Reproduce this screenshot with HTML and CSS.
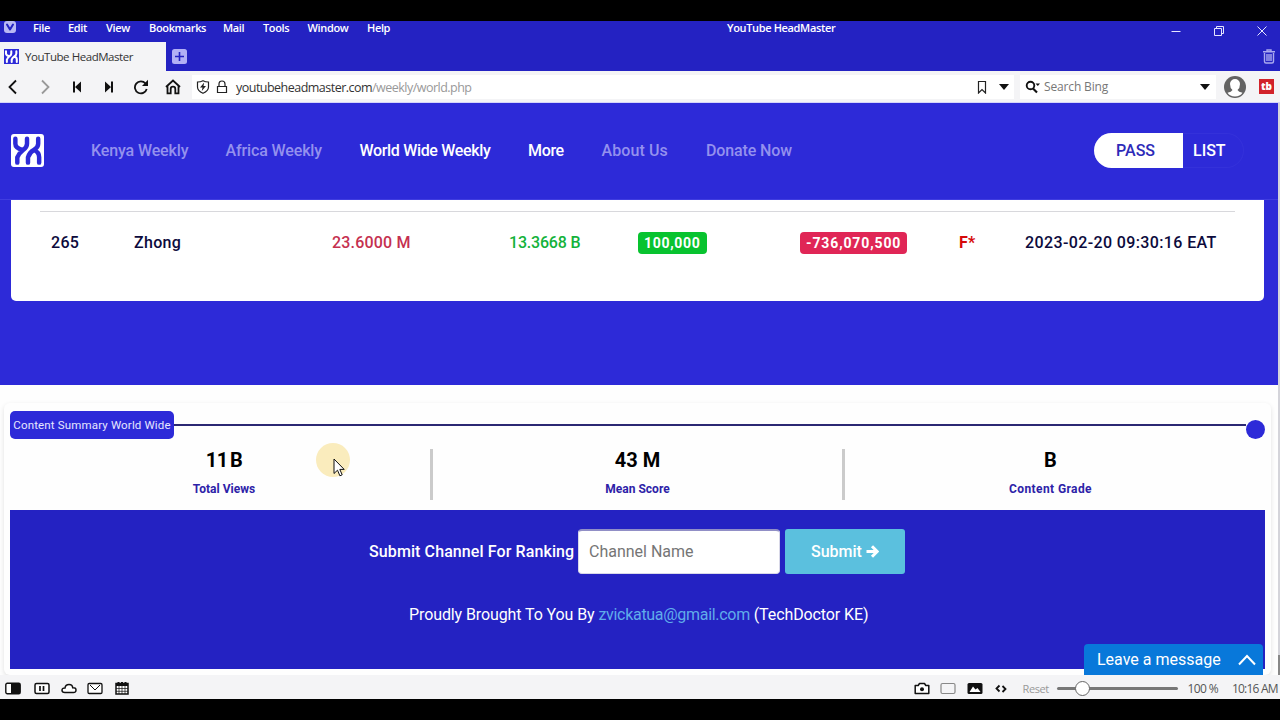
FILE: index.html
```html
<!DOCTYPE html>
<html lang="en">
<head>
    <meta charset="UTF-8">
    <meta name="viewport" content="width=device-width, initial-scale=1.0">
    <title>YouTube HeadMaster</title>
    <link rel="stylesheet" href="styles.css">
</head>
<body>
    <header class="titlebar">
        <div class="menubar">
            <svg class="vivaldi" viewBox="0 0 12 12"><rect width="12" height="12" rx="3" fill="#b9b8f3"/><path d="M3 3.5l3 5 3-5" fill="none" stroke="#2422c2" stroke-width="2" stroke-linecap="round" stroke-linejoin="round"/></svg>
            <span class="m-file">File</span>
            <span class="m-edit">Edit</span>
            <span class="m-view">View</span>
            <span class="m-bookmarks">Bookmarks</span>
            <span class="m-mail">Mail</span>
            <span class="m-tools">Tools</span>
            <span class="m-window">Window</span>
            <span class="m-help">Help</span>
            <span class="window-title">YouTube HeadMaster</span>
            <div class="window-buttons">
                <svg viewBox="0 0 12 12"><path d="M1.5 6.5h9"/></svg>
                <svg viewBox="0 0 12 12"><path d="M1.5 3.5h7v7h-7zM3.5 3.5v-2h7v7h-2"/></svg>
                <svg viewBox="0 0 12 12"><path d="M1.5 1.5l9 9M10.5 1.5l-9 9"/></svg>
            </div>
        </div>
        <div class="tabs">
            <div class="tab">
                <svg class="favicon" viewBox="0 0 34 34"><rect width="34" height="34" fill="#2d2ad8"/><use href="#yk" stroke="#fff"/></svg>
                <span>YouTube HeadMaster</span>
            </div>
            <svg class="new-tab" viewBox="0 0 15 15"><rect width="15" height="15" rx="2.5" fill="#b2b0f5"/><path d="M7.5 3v9M3 7.5h9" stroke="#2422c2" stroke-width="1.6"/></svg>
            <svg class="trash" viewBox="0 0 12 15"><path d="M0 2.7h12M4 2.5V1h4v1.5M1.5 4v8.5q0 1.5 1.5 1.5h6q1.500 0 1.500-1.500V4M4 5v7M6 5v7M8 5v7" fill="none" stroke="#aaa9ef" stroke-width="1.4"/></svg>
        </div>
    </header>

    <div class="toolbar">
        <div class="nav-buttons">
            <svg viewBox="0 0 16 16"><path d="M11 1.500L4.500 8l6.500 6.500"/></svg>
            <svg class="off" viewBox="0 0 16 16"><path d="M5 1.500L11.500 8 5 14.500"/></svg>
            <svg class="solid" viewBox="0 0 16 16"><path d="M4 2.500h2v11H4zM12 2.500v11L6 8z"/></svg>
            <svg class="solid" viewBox="0 0 16 16"><path d="M10 2.500h2v11h-2zM4 2.500v11L10 8z"/></svg>
            <svg viewBox="0 0 16 16"><path d="M12.500 4.500A6 6 0 1 0 13.700 10"/><path d="M15 .8v6.200H9z" fill="#111" stroke="none"/></svg>
            <svg viewBox="0 0 16 16"><path d="M1 8l7-6.500L15 8M2.500 7v7.300h3.200V10a2.300 2.300 0 0 1 4.600 0v4.300h3.200V7"/></svg>
        </div>
        <div class="address">
            <svg viewBox="0 0 14 14"><path d="M1.500 2q3 0 5.500-1.300Q9.500 2 12.500 2v5q0 3.800-5.500 6.300Q1.500 10.800 1.500 7z" fill="none" stroke="#222" stroke-width="1.200"/><path d="M8.200 2.500L4 7.500h2.500L5.800 11 10 6H7.500z" fill="#222"/></svg>
            <svg viewBox="0 0 14 14"><path d="M2.500 6.500h9v6h-9zM4 6.500V4q0-3 3-3t3 3v2.500" fill="none" stroke="#222" stroke-width="1.200"/></svg>
            <span class="url">youtubeheadmaster.com<span class="path">/weekly/world.php</span></span>
            <svg class="bookmark" viewBox="0 0 14 14"><path d="M3.500 1.500h7v11.500L7 9.500 3.500 13z" fill="none" stroke="#222" stroke-width="1.200"/></svg>
            <i class="caret"></i>
        </div>
        <div class="search">
            <svg viewBox="0 0 16 14"><circle cx="5.500" cy="5.500" r="3.800" fill="none" stroke="#111" stroke-width="1.900"/><path d="M8 8.500l4 4" stroke="#111" stroke-width="2.200"/><path d="M10.500 3.500h4.500l-2.200 2.500z" fill="#111"/></svg>
            <span>Search Bing</span>
            <i class="caret"></i>
        </div>
        <svg class="avatar" viewBox="0 0 22 22"><circle cx="11" cy="11" r="11" fill="#636363"/><path d="M6 8a5 5 0 0 1 10 0q0 4-2.500 6 1 2 5 2.700Q16 20.500 11 20.500T3.500 16.700q4-.7 5-2.700Q6 12 6 8" fill="#fff"/></svg>
        <span class="ext">tb</span>
    </div>

    <main class="page">
        <nav class="site-nav">
            <svg class="logo" viewBox="0 0 34 34">
                <rect width="34" height="34" rx="3" fill="#fff"/>
                <g id="yk" fill="none" stroke-width="4.600" stroke-linecap="round">
                    <path d="M4.500 5v5q0 4.500 7.500 6.500M16.500 5v5q0 3.500-4 6.500t-6 7.500v5.500M28 5v5q0 4-4.500 6.500T17.500 24v5.500M23.500 16.500q5.500 2 5.500 7.500v5.500"/>
                </g>
            </svg>
            <div class="links">
                <a>Kenya Weekly</a>
                <a>Africa Weekly</a>
                <a class="active">World Wide Weekly</a>
                <a class="active">More</a>
                <a class="about">About Us</a>
                <a>Donate Now</a>
            </div>
            <div class="toggle">
                <span class="pass">PASS</span>
                <span class="list">LIST</span>
            </div>
        </nav>

        <section class="hero">
            <div class="table-card">
                <div class="row">
                    <span>265</span>
                    <span>Zhong</span>
                    <span class="red">23.6000 M</span>
                    <span class="green">13.3668 B</span>
                    <span><b class="badge up">100,000</b></span>
                    <span><b class="badge down">-736,070,500</b></span>
                    <span class="grade">F*</span>
                    <span class="date">2023-02-20 09:30:16 EAT</span>
                </div>
            </div>
        </section>

        <section class="summary">
            <div class="summary-head">
                <span class="summary-label">Content Summary World Wide</span>
                <i class="line"></i>
                <i class="dot"></i>
            </div>
            <div class="stats">
                <div class="stat"><strong class="views">11 B</strong><span>Total Views</span></div>
                <div class="stat"><strong>43 M</strong><span>Mean Score</span></div>
                <div class="stat"><strong>B</strong><span>Content Grade</span></div>
            </div>
            <footer class="footer">
                <form class="submit-form">
                    <label for="channel">Submit Channel For Ranking</label>
                    <input id="channel" type="text" placeholder="Channel Name">
                    <button type="button">Submit <svg viewBox="0 0 13 13"><path d="M.5 6.500h10.500M6 1.300l5.200 5.200L6 11.700" fill="none" stroke="#fff" stroke-width="3"/></svg></button>
                </form>
                <p class="credit">Proudly Brought To You By <a>zvickatua@gmail.com</a> (TechDoctor KE)</p>
            </footer>
        </section>

        <i class="scrollbar"></i>
        <div class="chat">
            <span>Leave a message</span>
            <svg viewBox="0 0 18 12"><path d="M1 10.500l8-8.500 8 8.500" fill="none" stroke="#fff" stroke-width="2"/></svg>
        </div>
        <i class="halo"></i>
        <svg class="cursor" viewBox="0 0 12 19"><path d="M1 1v14.500l3.500-3.300 2.400 5.600 2.300-1-2.400-5.400H11.200z" fill="#fff" stroke="#111"/></svg>
    </main>

    <div class="statusbar">
        <div class="panel-icons">
            <svg viewBox="0 0 16 12"><rect x=".8" y=".8" width="14.400" height="10.400" rx="1.500" fill="#fff" stroke="#111" stroke-width="1.400"/><path d="M6 1h9v10H6z" fill="#111"/></svg>
            <svg viewBox="0 0 16 12"><rect x="1" y="1" width="14" height="10" rx="1.500" fill="#fff" stroke="#111" stroke-width="1.500"/><path d="M6 3.500v5M9.500 3.500v5" stroke="#111" stroke-width="1.700"/></svg>
            <svg viewBox="0 0 16 12"><path d="M4 10q-3 0-3-2.300T4 5.500Q4.500 2 8 2t3.700 3.200Q15 5 15 7.600T12 10z" fill="#fff" stroke="#111" stroke-width="1.500"/></svg>
            <svg viewBox="0 0 16 12"><rect x="1" y="1" width="14" height="10" rx="1.300" fill="#fff" stroke="#111" stroke-width="1.300"/><path d="M3 2.500l5 5 5-5" fill="none" stroke="#111"/></svg>
            <svg viewBox="0 0 16 13"><path d="M2 1.500h12V12H2z" fill="#fff" stroke="#111" stroke-width="1.500"/><path d="M2 3h12M4.500 0v3M8 0v3M11.500 0v3" stroke="#111" stroke-width="2"/><path d="M2 6.500h12M2 9.300h12M5 4v8M8 4v8M11 4v8" stroke="#111" stroke-width=".7"/></svg>
        </div>
        <div class="status-tools">
            <svg viewBox="0 0 16 12"><path d="M1.200 3h3L5.500 1h5l1.300 2h3v8H1.200z" fill="#fff" stroke="#111" stroke-width="1.500" stroke-linejoin="round"/><circle cx="8" cy="6.700" r="2" fill="#111"/></svg>
            <svg viewBox="0 0 16 12"><rect x="1" y="1" width="14" height="10" rx="1.500" fill="none" stroke="#888" stroke-width="1.200"/></svg>
            <svg viewBox="0 0 16 12"><rect x=".5" y=".5" width="15" height="11" rx="1.500" fill="#111"/><path d="M2.500 9.500L6 4l2.500 3 2-1.500 3 4z" fill="#fff"/></svg>
            <svg viewBox="0 0 16 12"><path d="M6.500 3L3.500 6l3 3M9.500 3.500L12.500 6.500l-3 3" fill="none" stroke="#111" stroke-width="1.800"/></svg>
            <span class="reset">Reset</span>
            <div class="zoom"><i class="knob"></i></div>
            <span class="percent">100 %</span>
            <span class="clock">10:16 AM</span>
        </div>
    </div>
</body>
</html>
```

FILE: styles.css
```css
* {
    box-sizing: border-box;
}
body {
    margin: 0;
    width: 1280px;
    height: 720px;
    padding: 21px 0;
    overflow: hidden;
    background: #000;
    font-family: "Open Sans", "Noto Sans", sans-serif;
    font-size: 12px;
}
svg {
    display: block;
    flex: none;
}
span {
    white-space: nowrap;
}

/* browser window */
.titlebar {
    height: 50px;
    background: #2422c2;
    color: #fff;
}
.menubar {
    display: flex;
    height: 21px;
    padding-left: 4px;
    font-size: 11px;
    font-weight: 600;
    line-height: 13px;
    letter-spacing: -0.35px;
}
.vivaldi {
    width: 12px;
    height: 12px;
    margin-right: 17px;
}
.m-file { width: 35px; }
.m-edit { width: 38px; }
.m-view { width: 43px; }
.m-bookmarks { width: 74px; }
.m-mail { width: 40px; }
.m-tools { width: 44.5px; }
.m-window { width: 59.5px; }
.m-help { width: 360px; }
.window-title {
    width: 443px;
}
.window-buttons {
    display: flex;
    gap: 31px;
    padding-top: 4px;
}
.window-buttons svg {
    width: 12px;
    height: 12px;
    fill: none;
    stroke: #e6e6ff;
}
.tabs {
    display: flex;
    align-items: center;
    height: 29px;
}
.tab {
    display: flex;
    align-items: center;
    gap: 6px;
    width: 166px;
    height: 29px;
    padding-left: 4px;
    background: #f4f4f6;
    color: #333;
    font-size: 11.5px;
    letter-spacing: -0.45px;
}
.favicon {
    width: 15px;
    height: 15px;
}
.new-tab {
    width: 15px;
    height: 15px;
    margin-left: 6px;
}
.trash {
    width: 12px;
    height: 15px;
    margin-left: auto;
    margin-right: 5px;
}
.toolbar {
    display: flex;
    align-items: center;
    height: 32px;
    background: #f4f4f6;
    border-bottom: 1px solid #d5d5fa;
}
.nav-buttons {
    display: flex;
    gap: 16px;
    width: 192px;
    padding-left: 5px;
}
.nav-buttons svg {
    width: 16px;
    height: 16px;
    fill: none;
    stroke: #111;
    stroke-width: 1.8;
}
.nav-buttons .off {
    stroke: #999;
}
.nav-buttons .solid {
    fill: #111;
    stroke: none;
}
.address {
    display: flex;
    align-items: center;
    gap: 5px;
    width: 822px;
    height: 24px;
    padding: 0 5px 0 4px;
    background: #fff;
}
.address svg {
    width: 14px;
    height: 14px;
}
.url {
    margin-left: 2px;
    padding-top: 1px;
    font-size: 12.5px;
    letter-spacing: -0.52px;
    color: #333;
}
.path {
    color: #999;
}
.address .bookmark {
    margin-left: auto;
    margin-right: 5px;
}
.caret {
    border: 5px solid transparent;
    border-top: 6px solid #111;
    border-bottom: 0;
}
.search {
    display: flex;
    align-items: center;
    width: 196px;
    height: 24px;
    margin-left: 6px;
    padding: 0 6px 0 5px;
    background: #fff;
    color: #777;
    letter-spacing: -0.15px;
}
.search svg {
    width: 16px;
    height: 14px;
    margin-right: 3px;
}
.search .caret {
    margin-left: auto;
}
.avatar {
    width: 22px;
    height: 22px;
    margin-left: 8px;
}
.ext {
    width: 15px;
    height: 15px;
    margin-left: 13px;
    background: #d2232a;
    color: #fff;
    font-size: 10px;
    font-weight: 800;
    line-height: 14px;
    text-align: center;
}

/* page */
.page {
    position: relative;
    height: 572px;
    overflow: hidden;
    background: #fefefe;
    font-family: Roboto, sans-serif;
    font-size: 16px;
}
.site-nav {
    display: flex;
    align-items: center;
    height: 97px;
    padding: 0 36px 2px 11px;
    background: #2d2ad8;
    border-bottom: 1px solid #403de0;
}
.logo {
    width: 33px;
    height: 33px;
    stroke: #2d2ad8;
}
.logo rect {
    stroke: none;
}
.links {
    display: grid;
    grid-template-columns: 134.5px 134px 168.5px 73.5px 104.5px 90px;
    margin-left: 47px;
    font-weight: 500;
    letter-spacing: -0.13px;
    color: #9491ee;
    white-space: nowrap;
}
.links .active {
    color: #fff;
    letter-spacing: -0.33px;
}
.links .about {
    letter-spacing: 0.1px;
}
.toggle {
    display: flex;
    width: 150px;
    height: 35px;
    margin-left: auto;
    border-radius: 18px;
    overflow: hidden;
    font-weight: 500;
    line-height: 35px;
    color: #fff;
    box-shadow: inset 0 0 0 1px #3431da;
}
.pass {
    width: 89px;
    padding-left: 22px;
    background: #fff;
    color: #2d2ab8;
}
.list {
    padding-left: 10px;
}
.hero {
    height: 185px;
    padding: 0 16px 0 11px;
    background: #2d2ad8;
}
.table-card {
    height: 101px;
    padding: 11px 29px;
    background: #fff;
    border-radius: 0 0 5px 5px;
}
.row {
    display: grid;
    grid-template-columns: 83px 198px 177px 129px 162px 159px 66px 191px;
    align-items: center;
    height: 62px;
    padding-left: 11px;
    border-top: 1px solid #d8d8dc;
    color: #0c0a3c;
    font-weight: 500;
    letter-spacing: 0.3px;
}
.red { color: #c5304f; letter-spacing: 0.2px; }
.green { color: #13b23a; letter-spacing: -0.2px; }
.grade { color: #d60a0a; font-weight: 700; }
.date { letter-spacing: 0.38px; }
.badge {
    display: inline-block;
    height: 22px;
    padding: 0 6px;
    border-radius: 4px;
    color: #fff;
    font-size: 14px;
    line-height: 22px;
}
.up { background: #08c32f; letter-spacing: 0.7px; }
.down { background: #e02656; letter-spacing: 0.88px; }

.summary {
    height: 272px;
    margin: 18px 9px 0 4px;
    padding: 8px 6px 0;
    border-radius: 6px;
    box-shadow: 0 2px 5px rgba(0, 0, 0, 0.12);
}
.summary-head {
    display: flex;
    height: 28px;
}
.summary-label {
    width: 164px;
    border-radius: 5px;
    background: #2d2ad8;
    color: #e6e6ff;
    font-size: 11.5px;
    letter-spacing: 0.16px;
    line-height: 28px;
    text-align: center;
}
.line {
    flex: 1;
    height: 2px;
    margin-top: 13px;
    background: #2b2873;
}
.dot {
    width: 19px;
    height: 19px;
    margin-top: 9px;
    border-radius: 50%;
    background: #2d2ad8;
}
.stats {
    display: flex;
    height: 71px;
    padding: 10px 0;
}
.stat {
    display: flex;
    flex-direction: column;
    align-items: center;
    width: 412px;
    border-right: 3px solid #cbcbcb;
}
.stat:first-child {
    width: 423px;
    padding-left: 8px;
}
.stat:last-child {
    flex: 1;
    width: auto;
    padding-right: 9px;
    border: 0;
}
.stat strong {
    color: #000;
    font-size: 20px;
    line-height: 22px;
}
.stat .views {
    word-spacing: -2px;
    letter-spacing: -0.6px;
}
.stat span {
    margin-top: 11px;
    color: #2d22a8;
    font-size: 12px;
    font-weight: 700;
    line-height: 14px;
}
.stat:last-child span {
    letter-spacing: 0.4px;
}
.footer {
    height: 159px;
    padding-top: 18px;
    background: #2422c2;
    color: #fff;
}
.submit-form {
    display: flex;
    align-items: center;
    height: 46px;
    padding-left: 359px;
}
.submit-form label {
    width: 209px;
    font-weight: 500;
    letter-spacing: 0.1px;
    white-space: nowrap;
}
.submit-form input {
    width: 202px;
    height: 45px;
    padding: 0 10px;
    border: 1px solid #d8d8e8;
    border-top: 2px solid #918fc6;
    border-radius: 4px;
    font: 16px Roboto, sans-serif;
}
.submit-form button {
    display: flex;
    align-items: center;
    gap: 4px;
    width: 120px;
    height: 45px;
    margin: 1px 0 0 5px;
    padding: 0 0 0 26px;
    border: 0;
    border-radius: 3px;
    background: #5bc0de;
    color: #fff;
    font: 500 16px Roboto, sans-serif;
}
.submit-form button svg {
    width: 13px;
    height: 13px;
}
.credit {
    margin: 31px 0 0 399px;
    line-height: 20px;
    letter-spacing: -0.1px;
    white-space: nowrap;
}
.credit a {
    color: #60acea;
    letter-spacing: -0.3px;
}
.scrollbar {
    position: absolute;
    top: 0;
    right: 0;
    width: 2px;
    height: 572px;
    background: linear-gradient(#d4d4da 552px, #888 552px);
}
.chat {
    position: absolute;
    right: 17px;
    bottom: 0;
    display: flex;
    justify-content: space-between;
    align-items: center;
    width: 179px;
    height: 31px;
    padding: 0 7px 0 13px;
    border-radius: 4px 4px 0 0;
    background: #0878da;
    color: #fff;
}
.chat svg {
    width: 18px;
    height: 12px;
}
.halo {
    position: absolute;
    left: 316px;
    top: 340px;
    width: 34px;
    height: 34px;
    border-radius: 50%;
    background: #faecbd;
}
.cursor {
    position: absolute;
    left: 333px;
    top: 355px;
    width: 12px;
    height: 19px;
}

.statusbar {
    display: flex;
    justify-content: space-between;
    align-items: center;
    height: 24px;
    padding: 2px 3px 0 5px;
    background: #f4f4f6;
    color: #555;
}
.panel-icons {
    display: flex;
    gap: 10.4px;
}
.panel-icons svg,
.status-tools svg {
    width: 16px;
    height: 13px;
}
.panel-icons svg:first-child {
    margin-right: 3px;
}
.status-tools {
    display: flex;
    align-items: center;
    gap: 10.5px;
}
.reset {
    width: 24px;
    margin-left: 3px;
    color: #999;
    font-size: 11px;
    letter-spacing: -0.4px;
}
.zoom {
    display: flex;
    align-items: center;
    width: 121px;
    height: 3px;
    margin-right: -1px;
    border-radius: 2px;
    background: #777;
}
.knob {
    width: 15px;
    height: 15px;
    margin-left: 18px;
    border: 1px solid #666;
    border-radius: 50%;
    background: #fff;
}
.percent {
    width: 34px;
    letter-spacing: -0.6px;
}
.clock {
    width: 45px;
    letter-spacing: -0.8px;
}
```
